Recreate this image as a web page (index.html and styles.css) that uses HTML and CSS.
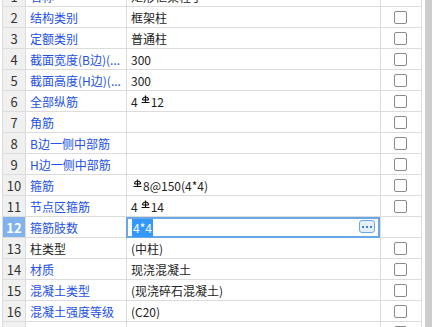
FILE: index.html
```html
<!DOCTYPE html>
<html>
<head>
<meta charset="utf-8">
<link rel="stylesheet" href="styles.css">
</head>
<body>
<div class="frame">
  <div class="grid">
    <div class="row"><div class="num">1</div><div class="name">名称</div><div class="val">矩形框架柱子</div><div class="chk"></div></div>
    <div class="row"><div class="num">2</div><div class="name">结构类别</div><div class="val">框架柱</div><div class="chk"><span class="box"></span></div></div>
    <div class="row"><div class="num">3</div><div class="name">定额类别</div><div class="val">普通柱</div><div class="chk"><span class="box"></span></div></div>
    <div class="row"><div class="num">4</div><div class="name">截面宽度(B边)(...</div><div class="val">300</div><div class="chk"><span class="box"></span></div></div>
    <div class="row"><div class="num">5</div><div class="name">截面高度(H边)(...</div><div class="val">300</div><div class="chk"><span class="box"></span></div></div>
    <div class="row"><div class="num">6</div><div class="name">全部纵筋</div><div class="val">4<svg class="rebar" viewBox="0 0 9 8"><path d="M1.5 5A3 3 0 0 1 7.5 5M1.5 5H7.5M4.5 0.5V7.5M0.5 7.5H8.5"/></svg>12</div><div class="chk"><span class="box"></span></div></div>
    <div class="row"><div class="num">7</div><div class="name">角筋</div><div class="val"></div><div class="chk"><span class="box"></span></div></div>
    <div class="row"><div class="num">8</div><div class="name">B边一侧中部筋</div><div class="val"></div><div class="chk"><span class="box"></span></div></div>
    <div class="row"><div class="num">9</div><div class="name">H边一侧中部筋</div><div class="val"></div><div class="chk"><span class="box"></span></div></div>
    <div class="row"><div class="num">10</div><div class="name">箍筋</div><div class="val"><svg class="rebar lead" viewBox="0 0 9 8"><path d="M1.5 5A3 3 0 0 1 7.5 5M1.5 5H7.5M4.5 0.5V7.5M0.5 7.5H8.5"/></svg>8@150(4*4)</div><div class="chk"><span class="box"></span></div></div>
    <div class="row"><div class="num">11</div><div class="name">节点区箍筋</div><div class="val">4<svg class="rebar" viewBox="0 0 9 8"><path d="M1.5 5A3 3 0 0 1 7.5 5M1.5 5H7.5M4.5 0.5V7.5M0.5 7.5H8.5"/></svg>14</div><div class="chk"><span class="box"></span></div></div>
    <div class="row selected"><div class="num">12</div><div class="name">箍筋肢数</div><div class="val"><div class="editor"><span class="sel">4*4</span><span class="more"><i></i><i></i><i></i></span></div></div><div class="chk"></div></div>
    <div class="row"><div class="num">13</div><div class="name black">柱类型</div><div class="val">(中柱)</div><div class="chk"><span class="box"></span></div></div>
    <div class="row"><div class="num">14</div><div class="name">材质</div><div class="val">现浇混凝土</div><div class="chk"><span class="box"></span></div></div>
    <div class="row"><div class="num">15</div><div class="name">混凝土类型</div><div class="val">(现浇碎石混凝土)</div><div class="chk"><span class="box"></span></div></div>
    <div class="row"><div class="num">16</div><div class="name">混凝土强度等级</div><div class="val">(C20)</div><div class="chk"><span class="box"></span></div></div>
    <div class="row"><div class="num">17</div><div class="name">混凝土外加剂</div><div class="val">(无)</div><div class="chk"><span class="box"></span></div></div>
  </div>
  <div class="gap"></div>
  <div class="scrollbar"></div>
</div>
</body>
</html>
```
FILE: styles.css
```css
html, body {
  margin: 0;
  padding: 0;
  background: #fff;
  overflow: hidden;
}
body {
  width: 432px;
  height: 327px;
  font-family: "Noto Sans CJK SC", "Noto Sans", sans-serif;
  font-size: 12px;
  color: #222;
}
.frame {
  display: flex;
  height: 327px;
  padding-left: 2px;
}
.grid {
  width: 420px;
  margin-top: -14px;
  border-left: 1px solid #dcdcdc;
  flex: none;
}
.row {
  display: grid;
  grid-template-columns: 23px 101px 254px 41px;
  height: 21px;
}
.row > div {
  box-sizing: border-box;
  border-right: 1px solid #dcdcdc;
  border-bottom: 1px solid #dcdcdc;
  height: 21px;
  line-height: 21px;
  white-space: nowrap;
  overflow: hidden;
}
.num {
  background: #f0f0f0;
  text-align: center;
  color: #333;
  font-size: 13px;
}
.name {
  padding-left: 4px;
  color: #2350e6;
}
.name.black {
  color: #222;
}
.val {
  padding-left: 4px;
  position: relative;
}
.chk {
  display: flex;
  align-items: center;
  justify-content: center;
}
.box {
  display: block;
  width: 13px;
  height: 13px;
  box-sizing: border-box;
  border: 1px solid #8a8a8a;
  border-radius: 2px;
  background: #fff;
  margin-left: -1px;
}
.rebar {
  width: 9px;
  height: 8px;
  margin: 0 1px 0 3px;
  vertical-align: 4px;
  fill: none;
  stroke: #111;
  stroke-width: 1.2;
}
.rebar.lead {
  margin-left: 2px;
}
.row.selected .num {
  background: #80b3ee;
  color: #fff;
  font-weight: bold;
}
.row.selected > .val {
  overflow: visible;
}
.editor {
  position: absolute;
  left: -1px;
  top: 0;
  right: 0;
  bottom: -1px;
  border: 2px solid #6aa7e6;
  box-sizing: border-box;
  display: flex;
  align-items: center;
  padding-left: 4px;
  line-height: 18px;
}
.sel {
  background: #3399ff;
  color: #fff;
  padding: 0 1px;
  height: 18px;
  line-height: 18px;
}
.more {
  position: absolute;
  right: 3px;
  top: 1px;
  width: 16px;
  height: 13px;
  box-sizing: border-box;
  border: 1px solid #6aa7e6;
  border-radius: 3px;
  background: #e4effb;
  display: flex;
  align-items: center;
  justify-content: center;
  gap: 2px;
}
.more i {
  display: block;
  width: 2px;
  height: 2px;
  background: #3a86e0;
}
.gap {
  width: 2px;
  flex: none;
}
.scrollbar {
  width: 8px;
  flex: none;
  background: #cdcdcd;
  height: 327px;
}
```
